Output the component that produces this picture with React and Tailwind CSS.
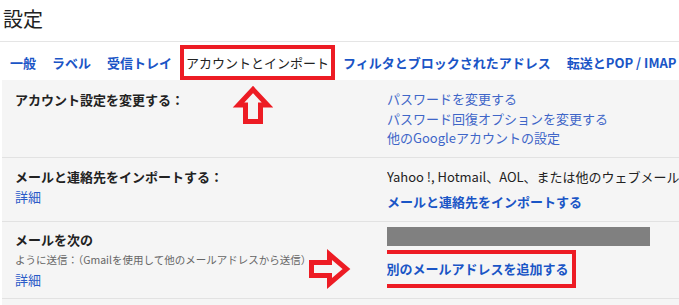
import React from "react";

const font = { fontFamily: '"Noto Sans CJK JP", "Noto Sans", sans-serif' };

function Tab({ children, active }) {
  if (active) {
    return (
      <div className="h-[35px] flex items-center border-4 border-[#ed1c24] px-[2px] text-[#222] whitespace-nowrap">
        {children}
      </div>
    );
  }
  return (
    <div className="h-[35px] flex items-center px-2 font-bold text-[#1a55c6] whitespace-nowrap">
      {children}
    </div>
  );
}

function Row({ left, right, first, last }) {
  return (
    <div className={"flex" + (first ? "" : " border-t border-[#e2e2e2]") + (last ? " border-b border-[#e2e2e2]" : "")}>
      <div className="w-[385px] pl-[13px] pt-[9px] pb-[8px] shrink-0">{left}</div>
      <div className="flex-1 min-w-0 overflow-hidden">{right}</div>
    </div>
  );
}

export default function App() {
  return (
    <div className="relative w-[679px] h-[305px] overflow-hidden bg-white text-[13px] leading-[20px]" style={font}>
      {/* Title */}
      <div className="h-[42px] border-b border-[#e5e5e5] pl-[3px] pt-[5px] text-[20px] leading-[28px] text-[#222]">
        設定
      </div>

      {/* Tabs */}
      <div className="h-[38px] flex items-end pl-[2px]">
        <Tab>一般</Tab>
        <Tab>ラベル</Tab>
        <Tab>受信トレイ</Tab>
        <Tab active>アカウントとインポート</Tab>
        <Tab>フィルタとブロックされたアドレス</Tab>
        <Tab>転送とPOP / IMAP</Tab>
      </div>

      {/* Content */}
      <div className="ml-[2px] bg-[#f5f5f5] pb-6">
        <Row
          first
          left={<div className="pt-[1px] font-bold text-[#222]">アカウント設定を変更する：</div>}
          right={
            <div className="pt-[9px] pb-[9px] flex flex-col leading-[19.5px] text-[#3f66c8]">
              <span>パスワードを変更する</span>
              <span>パスワード回復オプションを変更する</span>
              <span>他のGoogleアカウントの設定</span>
            </div>
          }
        />
        <Row
          left={
            <div className="flex flex-col">
              <span className="font-bold text-[#222]">メールと連絡先をインポートする：</span>
              <span className="text-[#2a5bc8]">詳細</span>
            </div>
          }
          right={
            <div className="pt-[9px] pb-[9px] flex flex-col">
              <span className="text-[#222] whitespace-nowrap">
                Yahoo !, Hotmail、AOL、または他のウェブメールまたは POP3 アカウントからインポートします。
              </span>
              <span className="mt-[5px] font-bold text-[#1a55c6] whitespace-nowrap">メールと連絡先をインポートする</span>
            </div>
          }
        />
        <Row
          last
          left={
            <div className="flex flex-col -mt-[1px]">
              <span className="font-bold text-[#222]">メールを次の</span>
              <span className="text-[10.5px] text-[#666] whitespace-nowrap">
                ように送信：（Gmailを使用して他のメールアドレスから送信）
              </span>
              <span className="text-[#2a5bc8] leading-[19px]">詳細</span>
            </div>
          }
          right={
            <div className="pt-[5px] pb-[10px] flex flex-col items-start">
              <div className="-ml-[4px] w-[267px] h-[19px] bg-[#808080]" />
              <div className="-ml-[11px] mt-[4px] h-[38px] w-[200px] border-[4.5px] border-[#ed1c24] flex items-center pl-[6.5px] font-bold text-[#1a55c6] whitespace-nowrap">
                別のメールアドレスを追加する
              </div>
            </div>
          }
        />
      </div>

      {/* Annotation arrows */}
      <svg className="absolute left-0 top-0 pointer-events-none" width="679" height="305">
        <polygon
          points="253,89.5 238.5,105 245.5,105 245.5,121.5 260.5,121.5 260.5,105 267.5,105"
          fill="#f5f5f5"
          stroke="#ed1c24"
          strokeWidth="5"
          strokeLinejoin="miter"
        />
        <polygon
          points="311.5,262.5 329.5,262.5 329.5,254.5 346.5,269 329.5,283.5 329.5,275.5 311.5,275.5"
          fill="#f5f5f5"
          stroke="#ed1c24"
          strokeWidth="5"
          strokeLinejoin="miter"
        />
      </svg>
    </div>
  );
}
